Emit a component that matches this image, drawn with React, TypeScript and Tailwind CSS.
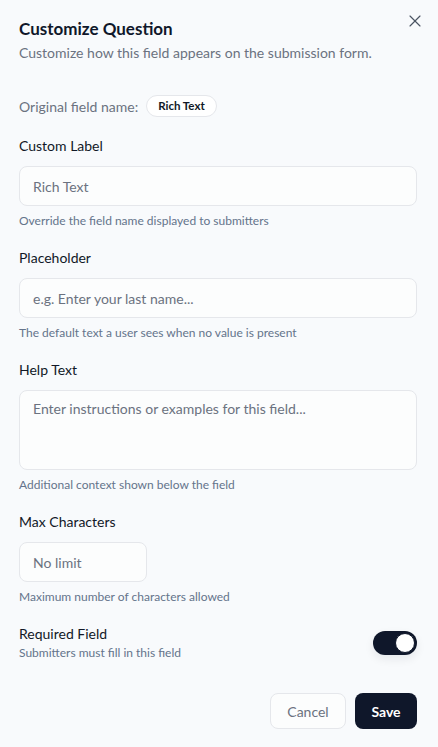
import { X } from "lucide-react";

function cn(...xs: Array<string | false | null | undefined>) {
  return xs.filter(Boolean).join(" ");
}

function Field({
  label,
  help,
  children,
}: {
  label: string;
  help: string;
  children: React.ReactNode;
}) {
  return (
    <div className="flex flex-col">
      <label className="text-[14px] leading-5 text-[#111827]">{label}</label>
      <div className="mt-[10px]">{children}</div>
      <p className="mt-[7px] text-[12px] leading-4 text-[#64748b]">{help}</p>
    </div>
  );
}

const inputCls =
  "h-10 rounded-lg border border-[#e5e7eb] bg-[#fcfdfd] px-[13px] text-[14px] text-[#111827] placeholder:text-[#6b7280] outline-none";

export default function App() {
  return (
    <div
      className="relative min-h-[747px] w-full bg-[#f8fafc] pl-[19px] pr-[21px] pt-[17px] pb-4"
      style={{ fontFamily: "Lato, 'Noto Sans', sans-serif" }}
    >
      <button className="absolute right-[12px] top-[10px] p-[1px] text-[#4b5563]">
        <X size={20} strokeWidth={1.4} />
      </button>

      <h2 className="text-[17px] font-bold leading-6 text-[#0f172a]">Customize Question</h2>
      <p className="mt-[2px] text-[14px] leading-5 text-[#6b7280]">
        Customize how this field appears on the submission form.
      </p>

      <div className="mt-[32px] flex items-center gap-2">
        <span className="text-[14px] text-[#6b7280]">Original field name:</span>
        <span className="inline-flex h-[22px] items-center rounded-full border border-[#e5e7eb] bg-white px-[11px] text-[11.5px] font-bold text-[#111827]">
          Rich Text
        </span>
      </div>

      <div className="mt-[19px] flex flex-col gap-[19px]">
        <Field label="Custom Label" help="Override the field name displayed to submitters">
          <input className={cn(inputCls, "w-full")} placeholder="Rich Text" />
        </Field>
        <Field label="Placeholder" help="The default text a user sees when no value is present">
          <input className={cn(inputCls, "w-full")} placeholder="e.g. Enter your last name..." />
        </Field>
        <Field label="Help Text" help="Additional context shown below the field">
          <textarea
            className="block h-20 w-full resize-none rounded-lg border border-[#e5e7eb] bg-[#fcfdfd] px-[13px] py-[8px] text-[14px] leading-5 text-[#111827] placeholder:text-[#6b7280] outline-none"
            placeholder="Enter instructions or examples for this field..."
          />
        </Field>
        <Field label="Max Characters" help="Maximum number of characters allowed">
          <input className={cn(inputCls, "w-32")} placeholder="No limit" />
        </Field>

        <div className="flex items-center justify-between">
          <div className="flex flex-col">
            <span className="text-[14px] leading-5 text-[#111827]">Required Field</span>
            <span className="mt-[1px] text-[12px] leading-4 text-[#64748b]">
              Submitters must fill in this field
            </span>
          </div>
          <button className="flex h-6 w-11 items-center rounded-full bg-[#0f172a] p-[2px] shadow-[0_4px_10px_rgba(15,23,42,0.08)]">
            <span className="ml-auto h-5 w-5 rounded-full border border-[#0f172a] bg-white" />
          </button>
        </div>
      </div>

      <div className="mt-[32px] flex justify-end gap-[9px]">
        <button className="h-9 w-[76px] rounded-lg border border-[#e5e7eb] bg-[#fcfdfd] text-[14px] text-[#6b7280]">
          Cancel
        </button>
        <button className="h-9 w-[62px] rounded-lg bg-[#0f172a] text-[14px] font-bold text-white">
          Save
        </button>
      </div>
    </div>
  );
}
